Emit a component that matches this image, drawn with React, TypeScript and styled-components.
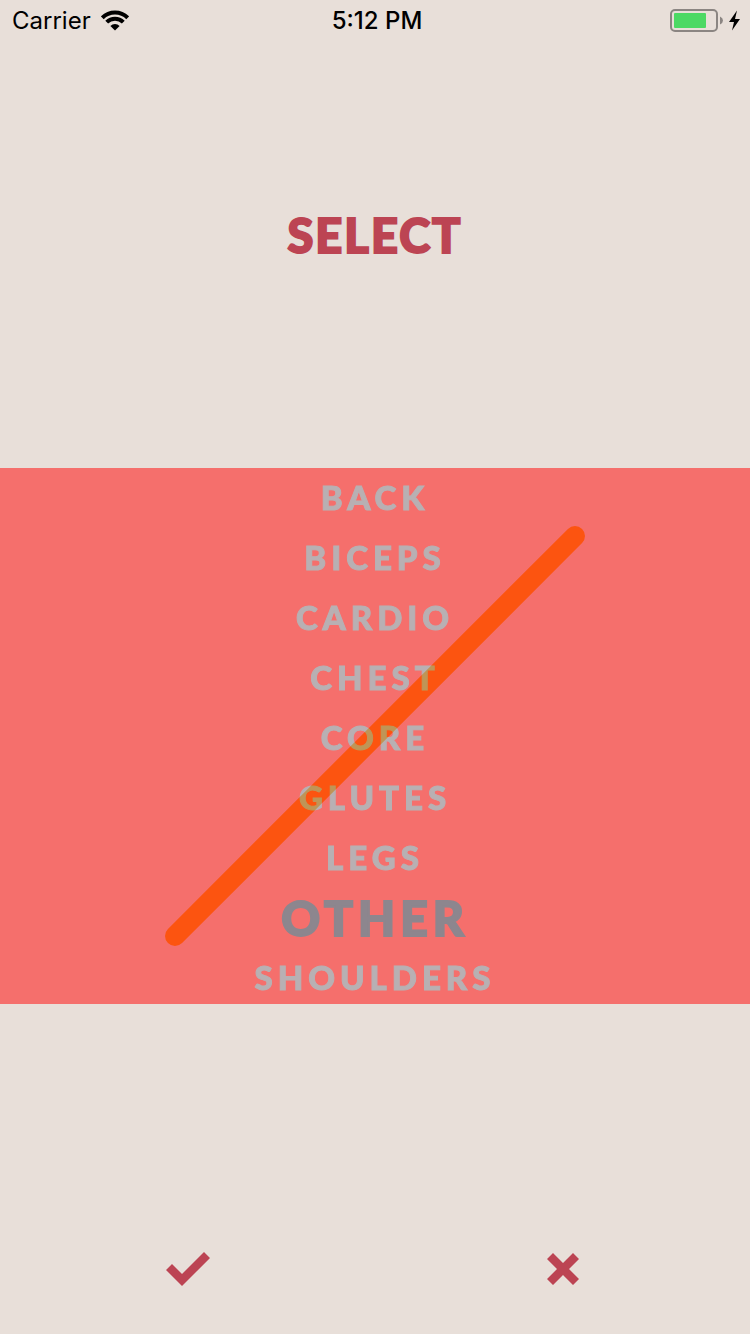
import React, { useState } from "react";
import styled, { createGlobalStyle } from "styled-components";

const GlobalStyle = createGlobalStyle`
  *, *::before, *::after { box-sizing: border-box; }
  body { margin: 0; background: #e8dfd9; }
`;

const Screen = styled.main`
  display: flex;
  flex-direction: column;
  min-height: 100vh;
  background: #e8dfd9;
  font-family: Lato, "Open Sans", sans-serif;
`;

const Header = styled.header`
  flex: 468 0 0;
  display: grid;
  grid-template-rows: 42px 1fr 40px;
`;

const StatusBar = styled.div`
  display: grid;
  grid-template-columns: 1fr auto 1fr;
  align-items: center;
  padding: 0 8px 0 12px;
  color: #000;
  font: 400 24px/42px Inter, sans-serif;
`;

const Network = styled.div`
  display: flex;
  align-items: center;
  gap: 10px;
`;

const Time = styled.time`
  font-weight: 500;
`;

const Power = styled.div`
  display: flex;
  align-items: center;
  justify-content: flex-end;
`;

const Title = styled.h1`
  align-self: center;
  margin: 0;
  color: #bc4453;
  font-size: 47px;
  line-height: 60px;
  font-weight: 900;
  letter-spacing: 2px;
  text-align: center;
  -webkit-text-stroke: 2px currentColor;
`;

const Picker = styled.fieldset`
  position: relative;
  isolation: isolate;
  flex: none;
  min-width: 0;
  height: 536px;
  margin: 0;
  padding: 0;
  border: 0;
  overflow: hidden;
  background: #f56f6c;
`;

const Option = styled.label<{ $active: boolean }>`
  display: block;
  height: 60px;
  color: ${(p) => (p.$active ? "#8d868e" : "#b8b0b3")};
  font-size: ${(p) => (p.$active ? 48 : 33)}px;
  line-height: ${(p) => (p.$active ? 60 : 58)}px;
  font-weight: 900;
  letter-spacing: 5px;
  text-align: center;
  -webkit-text-stroke: ${(p) => (p.$active ? 2 : 1)}px currentColor;
  cursor: pointer;
`;

const HiddenRadio = styled.input`
  position: absolute;
  opacity: 0;
  pointer-events: none;
`;

const Slash = styled.svg<{ $blend: "difference" | "plus-lighter" }>`
  position: absolute;
  inset: 0;
  margin: auto;
  mix-blend-mode: ${(p) => p.$blend};
  pointer-events: none;
`;

const Footer = styled.footer`
  flex: 330 0 0;
  display: grid;
  grid-template-columns: 1fr 1fr;
  align-items: end;
`;

const Action = styled.button`
  display: flex;
  align-items: center;
  justify-content: center;
  height: 130px;
  padding: 0;
  border: 0;
  background: none;
  color: #bc4453;
  cursor: pointer;
`;

const groups = ["BACK", "BICEPS", "CARDIO", "CHEST", "CORE", "GLUTES", "LEGS", "OTHER", "SHOULDERS"];

const WifiIcon = () => (
  <svg width="28" height="22" viewBox="0 0 28 22" aria-hidden="true">
    <g fill="none" stroke="#000" strokeWidth="4">
      <path d="M1.3 7.8a18 18 0 0 1 25.4 0" />
      <path d="M5.7 12.2a11.8 11.8 0 0 1 16.6 0" />
    </g>
    <path d="M9.4 15.9a6.5 6.5 0 0 1 9.2 0L14 20.5z" />
  </svg>
);

const BatteryIcon = () => (
  <svg width="72" height="24" viewBox="0 0 72 24" aria-hidden="true">
    <rect x="1" y="1" width="46" height="21" rx="4" fill="none" stroke="#8b8582" strokeWidth="2" />
    <rect x="4" y="4" width="32" height="15" rx="1" fill="#4cd964" />
    <path d="M50 7.5q3 1.5 3 4t-3 4z" fill="#8b8582" />
    <path d="M67 1.5 59 13h5l-2 8.5L70 10h-5z" fill="#000" />
  </svg>
);

const slashPath = "M10 410 410 10";

export default function App() {
  const [selected, setSelected] = useState("OTHER");

  return (
    <Screen>
      <GlobalStyle />
      <Header>
        <StatusBar>
          <Network>
            Carrier
            <WifiIcon />
          </Network>
          <Time>5:12 PM</Time>
          <Power>
            <BatteryIcon />
          </Power>
        </StatusBar>
        <Title id="picker-title">SELECT</Title>
      </Header>
      <Picker aria-labelledby="picker-title">
        {groups.map((name) => (
          <Option key={name} $active={name === selected}>
            <HiddenRadio
              type="radio"
              name="group"
              value={name}
              checked={name === selected}
              onChange={() => setSelected(name)}
            />
            {name}
          </Option>
        ))}
        {/* The two layers shift the colours below them, so the names stay readable under the line. */}
        <Slash $blend="difference" width="420" height="420" viewBox="0 0 420 420" aria-hidden="true">
          <path d={slashPath} stroke="#001b5c" strokeWidth="20" strokeLinecap="round" />
        </Slash>
        <Slash $blend="plus-lighter" width="420" height="420" viewBox="0 0 420 420" aria-hidden="true">
          <path d={slashPath} stroke="#070000" strokeWidth="20" strokeLinecap="round" />
        </Slash>
      </Picker>
      <Footer>
        <Action type="button" aria-label="Confirm">
          <svg width="44" height="34" viewBox="0 0 44 34" aria-hidden="true">
            <path d="M0 18 6 12 16 22 38 0 44 6 16 34z" fill="currentColor" />
          </svg>
        </Action>
        <Action type="button" aria-label="Cancel">
          <svg width="32" height="32" viewBox="0 0 32 32" aria-hidden="true">
            <path d="M6 0 16 10 26 0 32 6 22 16 32 26 26 32 16 22 6 32 0 26 10 16 0 6z" fill="currentColor" />
          </svg>
        </Action>
      </Footer>
    </Screen>
  );
}
